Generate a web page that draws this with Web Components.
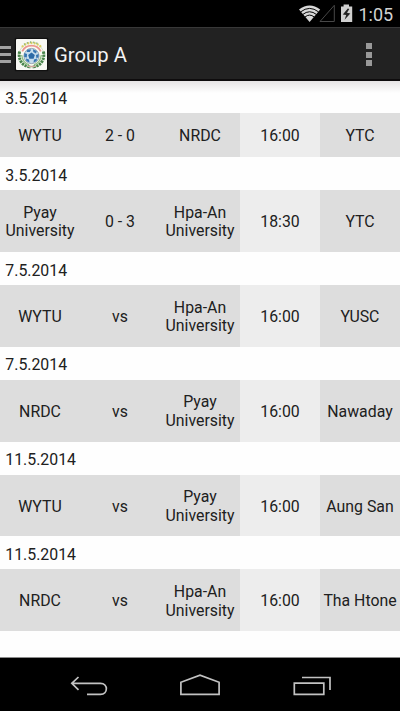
<!DOCTYPE html>
<html lang="en">
<head>
<meta charset="utf-8">
<title>Group A</title>
<style>
html, body { margin: 0; height: 100%; background: #000; }
</style>
</head>
<body>
<phone-screen>
  <status-bar slot="status">1:05</status-bar>
  <action-bar slot="top">Group A</action-bar>
  <match-list></match-list>
  <nav-bar slot="bottom"></nav-bar>
</phone-screen>
<script>
function define(name, html) {
  customElements.define(name, class extends HTMLElement {
    constructor() {
      super();
      const t = document.createElement('template');
      t.innerHTML = html;
      this.attachShadow({ mode: 'open' }).append(t.content.cloneNode(true));
    }
  });
}

define('phone-screen', `
<style>
:host { display: grid; grid-template-rows: 27px 54px minmax(0, 1fr) 54px; width: 400px; height: 711px; overflow: hidden; font-family: Roboto, sans-serif; background: #000; }
main { background: #fefefe linear-gradient(#e6e4e5, #fefefe) no-repeat 0 0 / 100% 12px; overflow: hidden; }
</style>
<slot name="status"></slot><slot name="top"></slot><main><slot></slot></main><slot name="bottom"></slot>`);

define('status-bar', `
<style>
:host { display: flex; justify-content: flex-end; align-items: flex-start; background: #000; color: #d2d2d2; font-size: 18px; line-height: 30px; }
svg { flex: none; }
span { box-sizing: border-box; width: 47px; padding-left: 5.5px; }
</style>
<svg width="56" height="27" viewBox="297 0 56 27">
  <path d="M299 9.6Q309.6 1.2 320.2 9.6L309.6 22Z" fill="#d8d8d8"/>
  <g fill="none" stroke="#000" stroke-width="1">
    <path d="M300.6 11.9Q309.6 4.9 318.6 11.9"/>
    <path d="M302.7 14.5Q309.6 9 316.5 14.5"/>
    <path d="M305 17Q309.6 13.2 314.2 17"/>
  </g>
  <path d="M320 21.5H334.3V5.3Z" fill="none" stroke="#484848"/>
  <path d="M341 6.5H343.6V4.5H349V6.5H352.2V22H341Z" fill="#d0d0d0"/>
  <path d="M347.8 8.5L342.8 14.4L346.2 15.1L344.6 19.8L350.3 13.4L347 12.7L349.3 9Z" fill="#222"/>
</svg><span><slot></slot></span>`);

define('club-crest', `
<style>:host { display: block; width: 31px; height: 31px; } svg { display: block; }</style>
<svg width="31" height="31" viewBox="0 0 31 31">
  <rect width="31" height="31" rx="1" fill="#f8f8f4"/>
  <circle cx="15.5" cy="16" r="12.4" fill="#f9faf3" stroke="#d6dfc6"/>
  <path d="M6 8A13 13 0 0 1 25 8" fill="none" stroke="#d9cf62" stroke-width="2.2" stroke-dasharray="1.8 1.4"/>
  <path d="M8 5.4A13 13 0 0 1 23 5.4" fill="none" stroke="#7fae78" stroke-width="1.3" stroke-dasharray="1.2 2"/>
  <path d="M6.2 12.4A10.4 10.4 0 0 1 24.8 12.4" fill="none" stroke="#eb9690" stroke-width="1.8"/>
  <path d="M3.6 12.5C1.8 20 6 27.5 14.8 28M27.4 12.5C29.2 20 25 27.5 16.2 28" fill="none" stroke="#47844a" stroke-width="3" stroke-dasharray="2.3 .8"/>
  <path d="M5.7 16Q6.5 23.5 13 25.8M25.3 16Q24.5 23.5 18 25.8" fill="none" stroke="#8fbd80" stroke-width="1.3"/>
  <circle cx="15.5" cy="17" r="7.6" fill="#c5dcec" stroke="#8196a8" stroke-width=".8"/>
  <path d="M15.5 13.6L18.8 16L17.6 19.8H13.4L12.2 16Z" fill="#2c6aa6"/>
  <path d="M11.4 10.5H15.2L13.8 13H10.6ZM17 10.2L20.8 12L20 14.4L17.3 13ZM8.3 14L11 15L10.8 18.4L8.2 18ZM22.7 15L20 16L20.4 19L22.5 18.5ZM10 19.6L13 20.6L13.5 23.6L10.4 22ZM21 19.6L18 20.6L17.5 23.6L20.6 22Z" fill="#3674b0"/>
  <path d="M11.5 27.4H19.5" stroke="#d3a9a0" stroke-width="1.3"/>
</svg>`);

define('action-bar', `
<style>
:host { display: flex; align-items: center; box-sizing: border-box; background: #222; border-top: 1px solid #383838; border-bottom: 2px solid #0e0c0d; padding-top: 2px; color: #f3f3f3; font-size: 20.3px; }
.menu { display: grid; gap: 4px; width: 11px; margin-right: 5px; }
.menu i { height: 3px; background: #a3a3a3; }
club-crest { margin-right: 7px; box-shadow: 0 0 1px 1px #111; }
.title { flex: 1; }
.more { display: grid; gap: 2.5px; margin-right: 28px; }
.more i { width: 6px; height: 6px; background: #999; }
</style>
<div class="menu"><i></i><i></i><i></i></div>
<club-crest></club-crest>
<div class="title"><slot></slot></div>
<div class="more"><i></i><i></i><i></i></div>`);

define('match-day', `
<style>
:host { display: block; font-size: 15.85px; line-height: 18.6px; color: #202020; }
.date { height: 33px; box-sizing: border-box; padding: 9.7px 0 0 5.3px; }
.row { display: grid; grid-template-columns: repeat(5, 80px); height: 44px; background: #ddd; }
:host([tall]) .row { height: 61.85px; }
::slotted(div) { box-sizing: border-box; display: flex; align-items: center; justify-content: center; text-align: center; padding-top: 2.8px; }
::slotted([slot=time]) { background: #ededed; }
</style>
<div class="date"><slot name="date"></slot></div>
<div class="row"><slot name="home"></slot><slot name="score"></slot><slot name="away"></slot><slot name="time"></slot><slot name="venue"></slot></div>`);

customElements.define('match-list', class extends HTMLElement {
  constructor() {
    super();
    const matches = [
      ['3.5.2014', 'WYTU', '2 - 0', 'NRDC', '16:00', 'YTC'],
      ['3.5.2014', 'Pyay<br>University', '0 - 3', 'Hpa-An<br>University', '18:30', 'YTC'],
      ['7.5.2014', 'WYTU', 'vs', 'Hpa-An<br>University', '16:00', 'YUSC'],
      ['7.5.2014', 'NRDC', 'vs', 'Pyay<br>University', '16:00', 'Nawaday'],
      ['11.5.2014', 'WYTU', 'vs', 'Pyay<br>University', '16:00', 'Aung San'],
      ['11.5.2014', 'NRDC', 'vs', 'Hpa-An<br>University', '16:00', 'Tha Htone']
    ];
    this.attachShadow({ mode: 'open' }).innerHTML =
      '<style>:host { display: block; margin-top: -1px; }</style>' +
      matches.map(([date, home, score, away, time, venue]) =>
        `<match-day${away.includes('<br>') ? ' tall' : ''}><span slot="date">${date}</span><div slot="home"><span>${home}</span></div><div slot="score">${score}</div><div slot="away"><span>${away}</span></div><div slot="time">${time}</div><div slot="venue">${venue}</div></match-day>`).join('');
  }
});

define('nav-bar', `
<style>
:host { display: block; box-sizing: border-box; background: #000; border-top: 1px solid #8b8b8b; }
svg { display: block; }
</style>
<svg width="400" height="53" viewBox="0 658 400 53" fill="none" stroke="#c2c2c2" stroke-width="1.7">
  <path d="M78.5 677L71.8 683.3L78.5 689.8M72 683.3H100.5C108.3 683.3 108.3 694.4 100.5 694.4H87"/>
  <path d="M180.9 694.3V682.3L200 675.1L219.1 682.3V694.3Z"/>
  <path d="M294.3 683.2H323.8V694.4H294.3ZM302 677.5H330V690"/>
</svg>`);
</script>
</body>
</html>
